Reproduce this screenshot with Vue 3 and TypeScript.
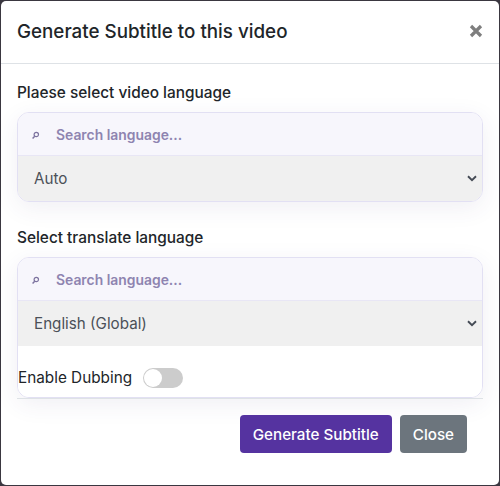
<script setup lang="ts">
import { ref } from 'vue'

const groups = [
  { label: 'Plaese select video language', value: 'Auto', dubbing: false },
  { label: 'Select translate language', value: 'English (Global)', dubbing: true },
]
const dub = ref(false)
</script>

<template>
  <div class="backdrop">
    <div class="modal">
      <header class="head">
        <h1 class="title">Generate Subtitle to this video</h1>
        <button class="x" type="button" aria-label="Close">
          <svg width="14" height="14" viewBox="0 0 14 14"><path d="M2 2 12 12M12 2 2 12" stroke="#7e7e7e" stroke-width="3.2" fill="none"/></svg>
        </button>
      </header>
      <section class="body">
        <div v-for="g in groups" :key="g.label" class="group">
          <label class="lab">{{ g.label }}</label>
          <div class="box">
            <div class="search">
              <svg class="mag" width="9" height="9" viewBox="0 0 9 9"><circle cx="5.3" cy="3.5" r="2.2" fill="none" stroke="#7d739f" stroke-width="1.2"/><path d="M3.7 5.2 1.6 7.4" stroke="#7d739f" stroke-width="1.4" fill="none"/></svg>
              <input class="inp" type="text" placeholder="Search language..." />
            </div>
            <div class="sel">
              <span>{{ g.value }}</span>
              <svg class="chev" width="10" height="7" viewBox="0 0 10 7"><path d="M1 1.3 5 5.2 9 1.3" fill="none" stroke="#454b55" stroke-width="1.9"/></svg>
            </div>
            <div v-if="g.dubbing" class="dub">
              <span>Enable Dubbing</span>
              <button class="tog" type="button" role="switch" :aria-checked="dub" @click="dub = !dub"><i class="knob"></i></button>
            </div>
          </div>
        </div>
      </section>
      <footer class="foot">
        <button class="btn primary" type="button">Generate Subtitle</button>
        <button class="btn secondary" type="button">Close</button>
      </footer>
    </div>
  </div>
</template>

<style>
html, body { margin: 0; background: #15101f; }
</style>

<style scoped>
.backdrop {
  width: 500px;
  height: 486px;
  box-sizing: border-box;
  padding: 1px;
  background: #3a3740;
  font-family: Inter, "Noto Sans", sans-serif;
  color: #212529;
}
.modal {
  height: 484px;
  box-sizing: border-box;
  background: #fff;
  border-radius: 5px;
  display: flex;
  flex-direction: column;
}
.head {
  height: 63px;
  box-sizing: border-box;
  border-bottom: 1px solid #dee2e6;
  display: flex;
  align-items: center;
  justify-content: space-between;
  padding: 0 16px;
}
.title { margin: 0; font-size: 18.8px; font-weight: 500; line-height: 1.2; }
.x { border: 0; background: none; padding: 0; width: 14px; height: 14px; margin-top: -3px; display: flex; }
.body { padding: 0 16px; display: flex; flex-direction: column; }
.group { display: flex; flex-direction: column; }
.group + .group { margin-top: 25px; }
.lab { font-size: 15.4px; font-weight: 450; line-height: 18px; margin-top: 20px; margin-bottom: 10px; }
.group + .group .lab { margin-top: 0; padding-top: 2px; }
.box {
  border: 1px solid #e2e0f3;
  border-radius: 12px;
  overflow: hidden;
  box-shadow: 0 6px 24px rgba(60, 50, 120, 0.08);
}
.search {
  height: 43px;
  box-sizing: border-box;
  padding-top: 2px;
  background: #f7f6fc;
  border-bottom: 1px solid #e8e6f5;
  display: flex;
  align-items: center;
  padding-left: 13px;
}
.mag { flex: none; }
.inp {
  margin-left: 16px;
  flex: 1;
  border: 0;
  background: none;
  outline: none;
  padding: 0;
  font: 600 13.9px Inter, "Noto Sans", sans-serif;
  color: #8e84b0;
}
.inp::placeholder { color: #8e84b0; opacity: 1; }
.sel {
  height: 45px;
  background: #f0f0f0;
  display: flex;
  align-items: center;
  justify-content: space-between;
  padding: 0 5px 0 16px;
  font-size: 15.2px;
  color: #4b5058;
}
.chev { margin-right: 0; }
.dub {
  height: 51px;
  display: flex;
  align-items: center;
  gap: 11px;
  font-size: 15.3px;
  padding-top: 12px;
  box-sizing: border-box;
  background: #fff;
}
.tog {
  width: 40px;
  height: 20px;
  border: 0;
  padding: 0;
  border-radius: 10px;
  background: #cccccc;
  position: relative;
  flex: none;
}
.knob {
  position: absolute;
  left: 1px;
  top: 1px;
  width: 18px;
  height: 18px;
  border-radius: 50%;
  background: #fff;
}
.foot {
  margin: 0 16px;
  border-top: 1px solid #dee2e6;
  display: flex;
  justify-content: flex-end;
  gap: 8px;
  padding: 16px 16px 0 0;
}
.btn {
  height: 38px;
  border: 0;
  border-radius: 4px;
  color: #fff;
  font: 450 15.2px Inter, "Noto Sans", sans-serif;
  padding: 0 13px;
}
.primary { background: #5533a0; }
.secondary { background: #6c757d; }
</style>
